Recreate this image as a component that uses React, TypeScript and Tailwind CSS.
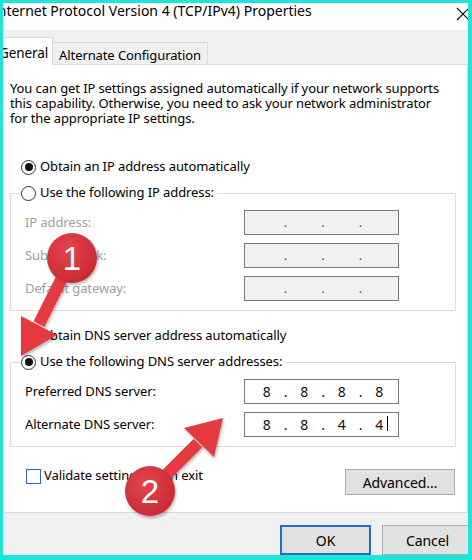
import type { ReactNode } from "react";

const Radio = ({ checked }: { checked?: boolean }) => (
	<span className="flex h-[15px] w-[15px] shrink-0 items-center justify-center rounded-full border border-[#333333] bg-white">
		{checked && <span className="h-[8px] w-[8px] rounded-full bg-[#111111]" />}
	</span>
);

const RadioRow = ({ checked, children }: { checked?: boolean; children: ReactNode }) => (
	<div className="flex h-[20px] items-center gap-[4px] whitespace-nowrap">
		<Radio checked={checked} />
		<span>{children}</span>
	</div>
);

// four octets with dots in between, like the Windows IP control
const IpBox = ({ octets, disabled, caret }: { octets: string[]; disabled?: boolean; caret?: boolean }) => (
	<div
		className={
			disabled
				? "flex h-[25px] w-[155px] items-center border border-[#7a7a7a] bg-[#f0f0f0] pl-[5px] text-[#555555]"
				: "flex h-[25px] w-[155px] items-center border border-[#7a7a7a] bg-white pl-[5px] text-[14px] text-[#111111]"
		}
	>
		{octets.map((o, i) => (
			<div key={i} className="flex items-center">
				{i > 0 && <span className="w-[4px] text-center">.</span>}
				<span className="relative w-[33.5px] text-center">
					{o}
					{caret && i === 3 && <span className="absolute top-[2px] right-[8px] h-[15px] w-px bg-black" />}
				</span>
			</div>
		))}
	</div>
);

const FieldRow = ({ label, disabled, children }: { label: string; disabled?: boolean; children: ReactNode }) => (
	<div className="flex h-[25px] items-center">
		<span className={disabled ? "w-[219px] text-[#a0a0a0]" : "w-[219px]"}>{label}</span>
		{children}
	</div>
);

const Annotations = () => (
	<svg className="pointer-events-none absolute inset-0" width="472" height="560" viewBox="0 0 472 560">
		<defs>
			<radialGradient id="badge" cx="40%" cy="35%" r="70%">
				<stop offset="0%" stopColor="#e4464c" />
				<stop offset="100%" stopColor="#c72833" />
			</radialGradient>
			<filter id="shadow" x="-30%" y="-30%" width="160%" height="160%">
				<feDropShadow dx="1" dy="2" stdDeviation="1.5" floodColor="#000000" floodOpacity="0.3" />
			</filter>
		</defs>
		<g filter="url(#shadow)">
			<line x1="72" y1="258" x2="39" y2="324" stroke="#e53a3f" strokeWidth="12" />
			<polygon points="21,356 57,335 21,316" fill="#e53a3f" />
			<line x1="150" y1="491" x2="198" y2="443" stroke="#e53a3f" strokeWidth="12" />
			<polygon points="223,418 214,457 184,428" fill="#e53a3f" />
			<circle cx="72" cy="258" r="25" fill="url(#badge)" />
			<circle cx="150" cy="491" r="25" fill="url(#badge)" />
		</g>
		<text x="72" y="270" textAnchor="middle" fill="#ffffff" fontSize="33" fontFamily="Liberation Sans, Arial, sans-serif">
			1
		</text>
		<text x="150" y="503" textAnchor="middle" fill="#ffffff" fontSize="33" fontFamily="Liberation Sans, Arial, sans-serif">
			2
		</text>
	</svg>
);

export default function App() {
	return (
		<div className="relative h-[560px] w-[472px] overflow-hidden bg-[#20e4da] pt-[3px] pr-[4px] pb-[5px] pl-[3px] font-['Noto_Sans',sans-serif] text-[13px] tracking-[-0.1px] text-[#000000]">
			<div className="flex h-full w-full flex-col overflow-hidden bg-white">
				{/* title bar */}
				<div className="flex h-[27px] shrink-0 items-start justify-between">
					<span className="-ml-[10px] text-[14px] leading-[16px] tracking-normal whitespace-nowrap">
						Internet Protocol Version 4 (TCP/IPv4) Properties
					</span>
					<svg className="mt-[4px] -mr-[2px]" width="14" height="14" viewBox="0 0 14 14">
						<path d="M1 1 L13 13 M13 1 L1 13" stroke="#111111" strokeWidth="1.2" />
					</svg>
				</div>

				{/* tabs */}
				<div className="flex h-[35px] shrink-0 items-end border-b border-[#d9d9d9] bg-[#f0f0f0]">
					<div className="relative -mb-px -ml-[8px] flex h-[28px] w-[58px] shrink-0 items-start justify-center border-t border-r border-[#d9d9d9] bg-white pt-[5px] text-[13.5px] whitespace-nowrap">
						General
					</div>
					<div className="flex h-[22px] w-[155px] shrink-0 items-start justify-center border-t border-r border-[#d9d9d9] pt-[3px] text-[13px] whitespace-nowrap">
						Alternate Configuration
					</div>
				</div>

				{/* general page */}
				<div className="flex flex-1 flex-col border-r border-b border-[#d9d9d9] pt-[16px] pr-[11px] pl-[7px]">
					<p className="leading-[15px] whitespace-nowrap">
						You can get IP settings assigned automatically if your network supports
						<br />
						this capability. Otherwise, you need to ask your network administrator
						<br />
						for the appropriate IP settings.
					</p>

					<div className="mt-[31px] ml-[11px]">
						<RadioRow checked>Obtain an IP address automatically</RadioRow>
					</div>

					<fieldset className="mt-[6px] border border-[#dcdcdc] p-0">
						<legend className="ml-[10px] pr-[3px]">
							<RadioRow>Use the following IP address:</RadioRow>
						</legend>
						<div className="flex flex-col gap-[8px] pt-[7px] pb-[9px] pl-[14px]">
							<FieldRow label="IP address:" disabled>
								<IpBox octets={["", "", "", ""]} disabled />
							</FieldRow>
							<FieldRow label="Subnet mask:" disabled>
								<IpBox octets={["", "", "", ""]} disabled />
							</FieldRow>
							<FieldRow label="Default gateway:" disabled>
								<IpBox octets={["", "", "", ""]} disabled />
							</FieldRow>
						</div>
					</fieldset>

					<div className="mt-[15px] ml-[11px]">
						<RadioRow>Obtain DNS server address automatically</RadioRow>
					</div>

					<fieldset className="mt-[6px] border border-[#dcdcdc] p-0">
						<legend className="ml-[10px] pr-[3px]">
							<RadioRow checked>Use the following DNS server addresses:</RadioRow>
						</legend>
						<div className="flex flex-col gap-[8px] pt-[7px] pb-[9px] pl-[14px]">
							<FieldRow label="Preferred DNS server:">
								<IpBox octets={["8", "8", "8", "8"]} />
							</FieldRow>
							<FieldRow label="Alternate DNS server:">
								<IpBox octets={["8", "8", "4", "4"]} caret />
							</FieldRow>
						</div>
					</fieldset>

					<div className="mt-[19px] flex items-start justify-between">
						<div className="ml-[16px] flex h-[20px] items-center gap-[3px]">
							<span className="h-[15px] w-[15px] border border-[#2f63ae] bg-white" />
							<span>Validate settings upon exit</span>
						</div>
						<button className="mt-[3px] mr-[1px] h-[26px] w-[110px] border border-[#adadad] bg-[#e1e1e1] text-[14px]">
							Advanced...
						</button>
					</div>
				</div>

				{/* footer */}
				<div className="flex h-[42px] shrink-0 items-start justify-end gap-[11px] bg-[#f0f0f0] pt-[12px]">
					<button className="h-[30px] w-[91px] border-2 border-[#1f6fcf] bg-[#e1e1e1] text-[14px]">OK</button>
					<button className="-mr-[5px] h-[30px] w-[91px] border border-[#adadad] bg-[#e1e1e1] text-[14px]">
						Cancel
					</button>
				</div>
			</div>
			<Annotations />
		</div>
	);
}
